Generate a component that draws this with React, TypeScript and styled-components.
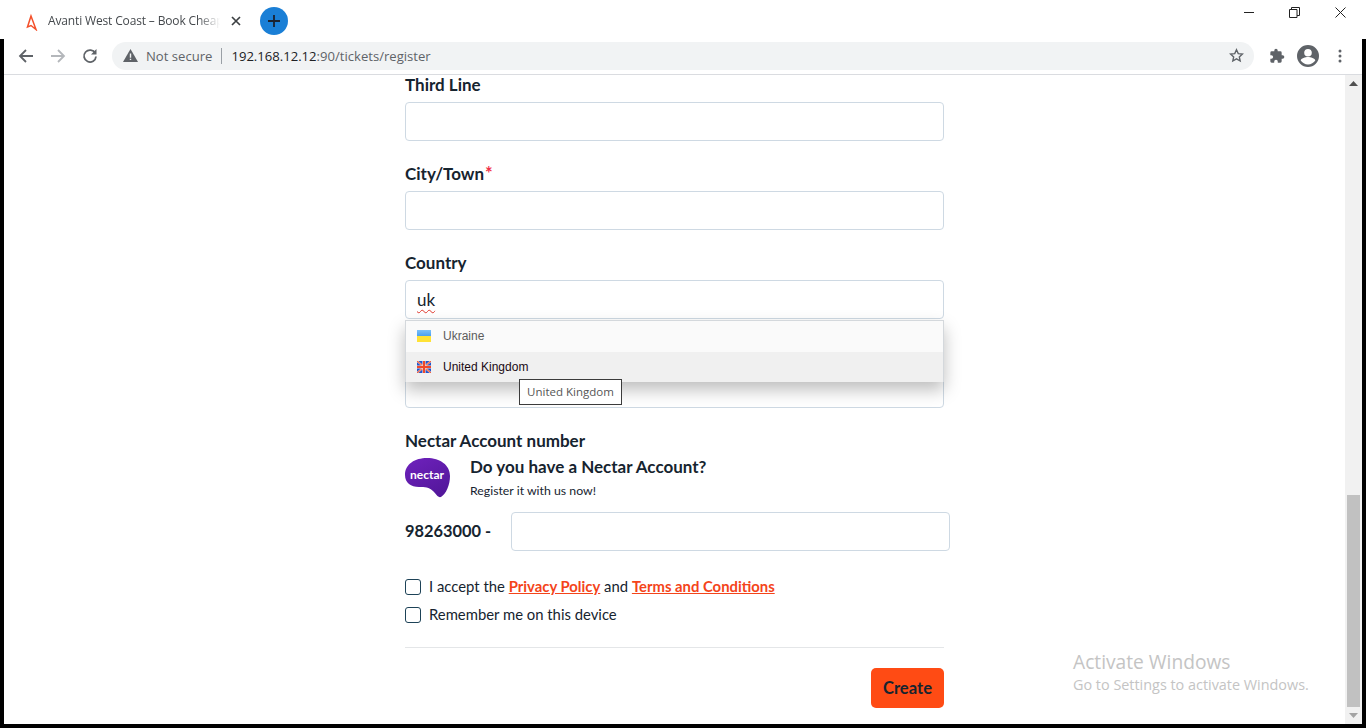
import React from "react";
import styled, { createGlobalStyle } from "styled-components";

const GlobalStyle = createGlobalStyle`
  html, body {
    margin: 0;
    padding: 0;
    height: 100%;
    overflow: hidden;
    background: #fff;
  }
  * {
    box-sizing: border-box;
  }
`;

const FlagUkraine = () => (
  <svg width="14" height="12" viewBox="0 0 14 12">
    <defs>
      <linearGradient id="uaBlue" x1="0" y1="0" x2="0" y2="1">
        <stop offset="0" stopColor="#7cc0fa" />
        <stop offset="1" stopColor="#4a9ff0" />
      </linearGradient>
    </defs>
    <rect width="14" height="6" fill="url(#uaBlue)" />
    <rect y="6" width="14" height="6" fill="#ffe236" />
  </svg>
);

const FlagUk = () => (
  <svg width="14" height="12" viewBox="0 0 14 12">
    <rect width="14" height="12" fill="#1f55d0" />
    <path d="M0 0 14 12M14 0 0 12" stroke="#f7b9a6" strokeWidth="1.8" />
    <path d="M0 0 14 12M14 0 0 12" stroke="#f0502e" strokeWidth="0.9" />
    <path d="M7 0v12M0 6h14" stroke="#fbdccf" strokeWidth="3.2" />
    <path d="M7 0v12M0 6h14" stroke="#f0482a" strokeWidth="2" />
  </svg>
);

const NectarLogo = () => (
  <svg width="46" height="40" viewBox="0 0 46 40">
    <defs>
      <linearGradient id="nectarFill" x1="0" y1="0" x2="0.6" y2="1">
        <stop offset="0" stopColor="#6f22bd" />
        <stop offset="1" stopColor="#54179c" />
      </linearGradient>
    </defs>
    <path
      d="M0 17C0 6 10 0 22 0c13 0 23 7 23 18 0 9-4 18-9 21-3 1-5-3-8-6-4-4-8-4-14-4C6 29 0 25 0 17z"
      fill="url(#nectarFill)"
    />
    <text x="22" y="21" textAnchor="middle" fontFamily="Lato, sans-serif" fontWeight="700" fontSize="12" fill="#fff">
      nectar
    </text>
  </svg>
);

const FormField = ({ label, required }: { label: string; required?: boolean }) => (
  <Field>
    <FieldLabel>
      {label}
      {required && <Required>*</Required>}
    </FieldLabel>
    <TextBox />
  </Field>
);

const App = () => {
  return (
    <Screen>
      <GlobalStyle />
      <TabStrip>
        <Tab>
          <svg width="14" height="20" viewBox="0 0 14 20">
            <path d="M6 5 2.500 16l3.500-1.500L11 18.500z" fill="none" stroke="#f4502a" strokeWidth="1.5" />
          </svg>
          <TabTitle>Avanti West Coast – Book Cheap</TabTitle>
          <TabClose>
            <svg width="10" height="10" viewBox="0 0 10 10">
              <path d="M1 1l8 8M9 1l-8 8" stroke="#3c4043" strokeWidth="1.7" />
            </svg>
          </TabClose>
        </Tab>
        <NewTab>
          <svg width="14" height="14" viewBox="0 0 14 14">
            <path d="M7 1v12M1 7h12" stroke="#1a2230" strokeWidth="1.8" />
          </svg>
        </NewTab>
        <WindowControls>
          <WindowButton>
            <svg width="11" height="11" viewBox="0 0 11 11">
              <path d="M1 5.500h10" stroke="#222" strokeWidth="1" />
            </svg>
          </WindowButton>
          <WindowButton>
            <svg width="11" height="11" viewBox="0 0 11 11">
              <path d="M.5 2.500h7.500v8h-7.500zM2.500 2.500v-2h8v8h-2.500" fill="none" stroke="#222" strokeWidth="1" />
            </svg>
          </WindowButton>
          <WindowButton>
            <svg width="11" height="11" viewBox="0 0 11 11">
              <path d="M.5.5l10 10M10.500.5l-10 10" stroke="#222" strokeWidth="1" />
            </svg>
          </WindowButton>
        </WindowControls>
      </TabStrip>

      <Frame>
        <Toolbar>
          <NavIcon>
            <svg width="16" height="16" viewBox="0 0 16 16">
              <path d="M15 8H2M8 2 2 8l6 6" fill="none" stroke="#5f6368" strokeWidth="1.8" />
            </svg>
          </NavIcon>
          <NavIcon>
            <svg width="16" height="16" viewBox="0 0 16 16">
              <path d="M1 8h13M8 2l6 6-6 6" fill="none" stroke="#b4b7bb" strokeWidth="1.800" />
            </svg>
          </NavIcon>
          <NavIcon>
            <svg width="16" height="16" viewBox="0 0 16 16">
              <path d="M13.300 5.200A6 6 0 1 0 14 8.500" fill="none" stroke="#5f6368" strokeWidth="1.800" />
              <path d="M14.500 1v5.500H9z" fill="#5f6368" />
            </svg>
          </NavIcon>
          <Omnibox>
            <svg width="15" height="13" viewBox="0 0 15 13">
              <path d="M7.500 0 15 13H0z" fill="#5f6368" />
              <path d="M6.800 4.500h1.400v4.200H6.800zM6.800 9.700h1.400v1.400H6.800z" fill="#f1f3f4" />
            </svg>
            <SecurityText>Not secure</SecurityText>
            <OmniDivider />
            <Url>
              192.168.12.12<UrlRest>:90/tickets/register</UrlRest>
            </Url>
            <OmniStar>
              <svg width="15" height="15" viewBox="0 0 24 24">
                <path
                  d="M12 2.800l2.800 6.200 6.700.7-5 4.500 1.400 6.600-5.900-3.400-5.900 3.400 1.400-6.600-5-4.500 6.700-.7z"
                  fill="none"
                  stroke="#5f6368"
                  strokeWidth="2.200"
                />
              </svg>
            </OmniStar>
          </Omnibox>
          <ToolbarEnd>
            <svg width="16" height="16" viewBox="0 0 24 24">
              <path
                d="M20.500 11H19V7a2 2 0 0 0-2-2h-4V3.500a2.500 2.500 0 0 0-5 0V5H4a2 2 0 0 0-2 2v3.800h1.500a2.700 2.700 0 0 1 0 5.400H2V20a2 2 0 0 0 2 2h3.800v-1.500a2.700 2.700 0 0 1 5.400 0V22H17a2 2 0 0 0 2-2v-4h1.500a2.500 2.500 0 0 0 0-5z"
                fill="#5f6368"
              />
            </svg>
            <svg width="24" height="24" viewBox="0 0 24 24">
              <path
                d="M12 1a11 11 0 1 0 0 22 11 11 0 0 0 0-22zm0 4a3.800 3.800 0 1 1 0 7.600A3.800 3.800 0 0 1 12 5zm0 15.500c-3 0-5.800-1.500-7.300-3.900 0-2.400 4.900-3.700 7.300-3.700s7.300 1.300 7.300 3.700c-1.500 2.400-4.300 3.900-7.300 3.900z"
                fill="#5f6368"
              />
            </svg>
            <MenuDots width="4" height="14" viewBox="0 0 4 14">
              <circle cx="2" cy="2" r="1.500" fill="#5f6368" />
              <circle cx="2" cy="7" r="1.500" fill="#5f6368" />
              <circle cx="2" cy="12" r="1.500" fill="#5f6368" />
            </MenuDots>
          </ToolbarEnd>
        </Toolbar>

        <Viewport>
          <PageBody>
            <FormColumn>
              <FormField label="Third Line" />
              <FormField label="City/Town" required />
              <CountryField>
                <FieldLabel>Country</FieldLabel>
                <TextBox>
                  <TypedValue>uk</TypedValue>
                </TextBox>
                <Suggestions>
                  <Suggestion>
                    <FlagUkraine />
                    Ukraine
                  </Suggestion>
                  <Suggestion $active>
                    <FlagUk />
                    United Kingdom
                  </Suggestion>
                  <NativeTooltip>United Kingdom</NativeTooltip>
                </Suggestions>
              </CountryField>
              <HiddenBox />
              <NectarBlock>
                <FieldLabel>Nectar Account number</FieldLabel>
                <NectarPromo>
                  <NectarLogo />
                  <div>
                    <PromoTitle>Do you have a Nectar Account?</PromoTitle>
                    <PromoText>Register it with us now!</PromoText>
                  </div>
                </NectarPromo>
                <NectarRow>
                  <NectarPrefix>98263000 -</NectarPrefix>
                  <NectarInput />
                </NectarRow>
              </NectarBlock>
              <CheckGroup>
                <CheckRow>
                  <CheckBox />
                  <CheckText>
                    I accept the <TermsLink>Privacy Policy</TermsLink> and{" "}
                    <TermsLink>Terms and Conditions</TermsLink>
                  </CheckText>
                </CheckRow>
                <CheckRow>
                  <CheckBox />
                  <CheckText>Remember me on this device</CheckText>
                </CheckRow>
              </CheckGroup>
              <Rule />
              <Actions>
                <CreateButton>Create</CreateButton>
              </Actions>
            </FormColumn>
            <Watermark>
              <WatermarkTitle>Activate Windows</WatermarkTitle>
              <WatermarkText>Go to Settings to activate Windows.</WatermarkText>
            </Watermark>
          </PageBody>
          <Scrollbar>
            <ScrollArrow>
              <svg width="9" height="5" viewBox="0 0 9 5">
                <path d="M4.500 0 9 5H0z" fill="#505050" />
              </svg>
            </ScrollArrow>
            <ScrollTrack>
              <ScrollThumb />
            </ScrollTrack>
            <ScrollArrow>
              <svg width="9" height="5" viewBox="0 0 9 5">
                <path d="M0 0h9L4.500 5z" fill="#a3a3a3" />
              </svg>
            </ScrollArrow>
          </Scrollbar>
        </Viewport>
      </Frame>
    </Screen>
  );
};

export default App;

const Screen = styled.div`
  width: 1366px;
  height: 728px;
  display: flex;
  flex-direction: column;
  background: #000;
  overflow: hidden;
`;

const TabStrip = styled.div`
  height: 39px;
  flex: none;
  display: flex;
  align-items: center;
  background: #fff;
  padding: 3px 0 0 25px;
`;

const Tab = styled.div`
  width: 222px;
  display: flex;
  align-items: center;
`;

const TabTitle = styled.div`
  width: 172px;
  flex: none;
  margin: -1px 0 0 9px;
  white-space: nowrap;
  font: 12px "Open Sans", sans-serif;
  letter-spacing: -0.15px;
  color: #45494d;
  mask-image: linear-gradient(90deg, #000 150px, transparent 172px);
`;

const TabClose = styled.div`
  display: flex;
  margin-left: 11px;
`;

const NewTab = styled.div`
  width: 28px;
  height: 28px;
  margin-left: 13px;
  border-radius: 50%;
  background: #1a7fd6;
  display: flex;
  align-items: center;
  justify-content: center;
`;

const WindowControls = styled.div`
  margin-left: auto;
  display: flex;
  align-self: flex-start;
  padding-top: 4px;
  padding-right: 20px;
  gap: 35px;
`;

const WindowButton = styled.div`
  width: 11px;
  height: 12px;
  display: flex;
`;

const Frame = styled.div`
  flex: 1;
  min-height: 0;
  display: flex;
  flex-direction: column;
  margin: 0 4px 4px;
  background: #fff;
`;

const Toolbar = styled.div`
  height: 36px;
  flex: none;
  display: flex;
  align-items: center;
  padding: 0 0 2px 14px;
  border-bottom: 1px solid #dadce0;
`;

const NavIcon = styled.div`
  width: 16px;
  height: 16px;
  margin-right: 16px;
  display: flex;
`;

const Omnibox = styled.div`
  width: 1142px;
  height: 28px;
  margin-left: -2px;
  padding: 0 10px 0 11px;
  background: #f1f3f4;
  border-radius: 14px;
  display: flex;
  align-items: center;
`;

const SecurityText = styled.span`
  margin-left: 8px;
  font: 13.1px "Open Sans", sans-serif;
  color: #5f6368;
`;

const OmniDivider = styled.span`
  width: 1px;
  height: 16px;
  margin: 0 9px;
  background: #9aa0a6;
`;

const Url = styled.span`
  font: 13.1px "Open Sans", sans-serif;
  color: #202124;
`;

const UrlRest = styled.span`
  color: #5f6368;
`;

const OmniStar = styled.div`
  margin-left: auto;
  display: flex;
`;

const ToolbarEnd = styled.div`
  display: flex;
  align-items: center;
  margin-left: 15px;
  gap: 11px;
`;

const MenuDots = styled.svg`
  margin-left: 7px;
`;

const Viewport = styled.div`
  flex: 1;
  min-height: 0;
  display: flex;
`;

const PageBody = styled.div`
  position: relative;
  flex: 1;
  min-width: 0;
  padding-left: 401px;
  overflow: hidden;
`;

const FormColumn = styled.div`
  width: 539px;
  color: #16242f;
  font-family: Lato, sans-serif;
`;

const Field = styled.div`
  height: 89px;
`;

const FieldLabel = styled.div`
  height: 27px;
  line-height: 20px;
  font-size: 17px;
  font-weight: 700;
  color: #16242f;
`;

const Required = styled.span`
  margin-left: 1px;
  font-size: 18px;
  line-height: 0;
  color: #f0304a;
`;

const TextBox = styled.div`
  height: 39px;
  padding: 0 11px;
  display: flex;
  align-items: center;
  background: #fff;
  border: 1px solid #ced9e3;
  border-radius: 4px;
`;

const CountryField = styled.div`
  position: relative;
  height: 89px;
`;

const TypedValue = styled.span`
  font-size: 17px;
  color: #16242f;
  text-decoration: underline wavy #e0392e 1px;
  text-underline-offset: 3px;
`;

const Suggestions = styled.div`
  position: absolute;
  top: 67px;
  left: 0;
  right: 0;
  padding-top: 1px;
  background: #fafafa;
  border: 1px solid #d4d8dc;
  border-width: 1px 1px 0;
  box-shadow: 0 8px 16px rgba(0, 0, 0, 0.26);
  z-index: 2;
`;

const Suggestion = styled.div<{ $active?: boolean }>`
  height: 30px;
  padding-left: 11px;
  padding-bottom: ${(p) => (p.$active ? "0" : "2px")};
  display: flex;
  align-items: center;
  gap: 12px;
  font: 12px "Liberation Sans", Arial, sans-serif;
  color: ${(p) => (p.$active ? "#1a0a14" : "#5c5c5c")};
  background: ${(p) => (p.$active ? "#f0f0f0" : "transparent")};
`;

const NativeTooltip = styled.div`
  position: absolute;
  left: 113px;
  top: 58px;
  height: 26px;
  width: 103px;
  padding-bottom: 2px;
  display: flex;
  align-items: center;
  justify-content: center;
  background: #fff;
  border: 1px solid #3b3b3b;
  font: 11.5px "Open Sans", sans-serif;
  color: #555;
  white-space: nowrap;
`;

const HiddenBox = styled.div`
  height: 39px;
  margin-top: 27px;
  border: 1px solid #ced9e3;
  border-radius: 4px;
`;

const NectarBlock = styled.div`
  margin-top: 23px;
`;

const NectarPromo = styled.div`
  display: flex;
  align-items: flex-start;
  gap: 19px;
  height: 54px;
`;

const PromoTitle = styled.div`
  font-size: 17px;
  font-weight: 700;
  line-height: 20px;
  margin-top: -1px;
`;

const PromoText = styled.div`
  font-size: 12.3px;
  line-height: 16px;
  margin-top: 6px;
`;

const NectarRow = styled.div`
  display: flex;
  align-items: center;
  width: 545px;
`;

const NectarPrefix = styled.div`
  width: 106px;
  flex: none;
  margin-top: -2px;
  font-size: 16.4px;
  font-weight: 700;
`;

const NectarInput = styled(TextBox)`
  flex: 1;
`;

const CheckGroup = styled.div`
  margin-top: 22px;
`;

const CheckRow = styled.div`
  display: flex;
  align-items: center;
  height: 28px;
  gap: 8px;
  font-size: 14.85px;
  color: #16242f;
`;

const CheckText = styled.span`
  margin-top: -2px;
`;

const CheckBox = styled.div`
  width: 16px;
  height: 16px;
  border: 1.500px solid #1d4257;
  border-radius: 3px;
  background: #fff;
`;

const TermsLink = styled.a`
  color: #f4441a;
  font-weight: 700;
  text-decoration: underline;
`;

const Rule = styled.div`
  height: 1px;
  margin-top: 18px;
  background: #e4e6e8;
`;

const Actions = styled.div`
  display: flex;
  justify-content: flex-end;
  margin-top: 20px;
`;

const CreateButton = styled.button`
  width: 73px;
  height: 40px;
  border: 0;
  border-radius: 5px;
  background: #ff4b14;
  color: #16242f;
  font: 700 16.6px Lato, sans-serif;
`;

const Watermark = styled.div`
  position: absolute;
  left: 1069px;
  top: 573px;
  font-family: "Open Sans", sans-serif;
  color: #c4c4c4;
  white-space: nowrap;
`;

const WatermarkTitle = styled.div`
  font-size: 19.2px;
  line-height: 27px;
`;

const WatermarkText = styled.div`
  font-size: 14.4px;
  line-height: 19px;
`;

const Scrollbar = styled.div`
  width: 17px;
  flex: none;
  display: flex;
  flex-direction: column;
  background: #f1f1f1;
`;

const ScrollArrow = styled.div`
  height: 17px;
  flex: none;
  display: flex;
  align-items: center;
  justify-content: center;
`;

const ScrollTrack = styled.div`
  flex: 1;
  display: flex;
  flex-direction: column;
  justify-content: flex-end;
`;

const ScrollThumb = styled.div`
  height: 212px;
  margin: 0 2px;
  background: #c1c1c1;
`;
